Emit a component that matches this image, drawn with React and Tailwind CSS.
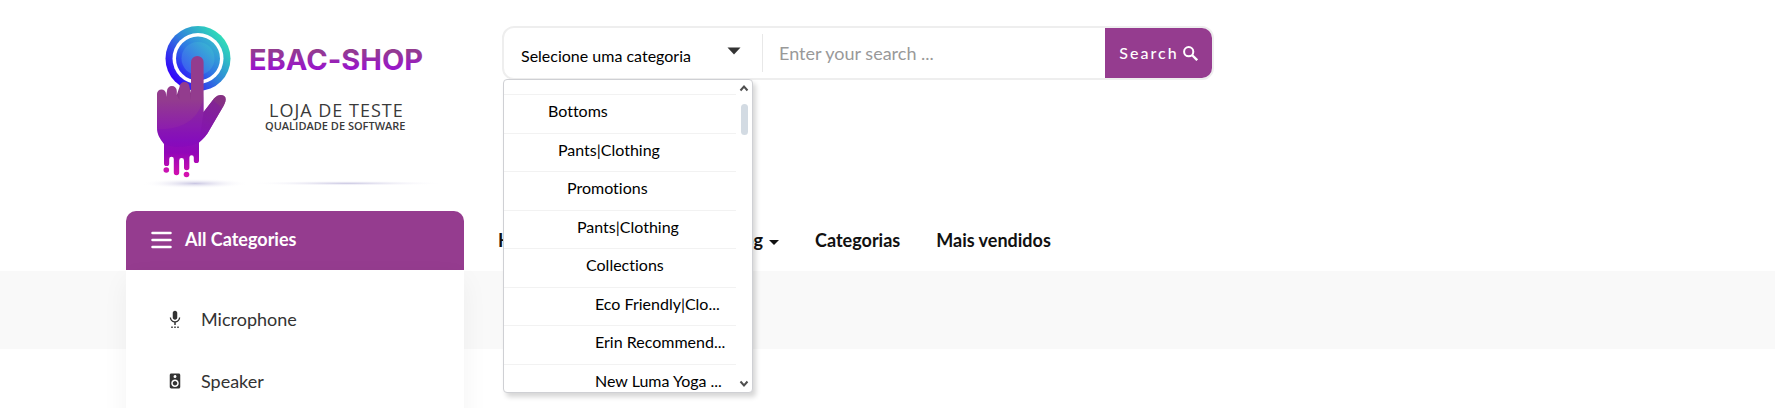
import { MdSettingsVoice, MdSpeaker } from "react-icons/md";

const options = [
  { label: "Bottoms", indent: "pl-[44px]" },
  { label: "Pants|Clothing", indent: "pl-[54px]" },
  { label: "Promotions", indent: "pl-[63px]" },
  { label: "Pants|Clothing", indent: "pl-[73px]" },
  { label: "Collections", indent: "pl-[82px]" },
  { label: "Eco Friendly|Clo...", indent: "pl-[91px]" },
  { label: "Erin Recommend...", indent: "pl-[91px]" },
  { label: "New Luma Yoga ...", indent: "pl-[91px]" },
];

const links = [
  { label: "Home" },
  { label: "Todas as lojas" },
  { label: "Blog", caret: true },
  { label: "Categorias" },
  { label: "Mais vendidos" },
];

function Logo() {
  return (
    <svg viewBox="0 0 320 190" width="320" height="190" role="img" aria-label="EBAC-SHOP">
      <defs>
        <linearGradient id="ring" x1="0.15" y1="0.85" x2="0.9" y2="0.2">
          <stop offset="0" stopColor="#3302fa" />
          <stop offset="0.5" stopColor="#2f7fdc" />
          <stop offset="1" stopColor="#2fdcb9" />
        </linearGradient>
        <linearGradient id="disc" x1="0.1" y1="0.9" x2="0.85" y2="0.1">
          <stop offset="0" stopColor="#2b1df5" />
          <stop offset="0.5" stopColor="#2f78e4" />
          <stop offset="1" stopColor="#35b4cf" />
        </linearGradient>
        <linearGradient id="core" x1="0.1" y1="0.9" x2="0.9" y2="0.1">
          <stop offset="0" stopColor="#3c5cf2" />
          <stop offset="1" stopColor="#38b5d2" />
        </linearGradient>
        <linearGradient id="hand" gradientUnits="userSpaceOnUse" x1="0" y1="46" x2="0" y2="167">
          <stop offset="0" stopColor="#933c8e" />
          <stop offset="0.36" stopColor="#933c8e" />
          <stop offset="0.7" stopColor="#8a10bb" />
          <stop offset="0.8" stopColor="#9206b8" />
          <stop offset="1" stopColor="#d80fae" />
        </linearGradient>
        <linearGradient id="thumb" gradientUnits="userSpaceOnUse" x1="92" y1="92" x2="68" y2="134">
          <stop offset="0" stopColor="#822f80" />
          <stop offset="1" stopColor="#8a10b8" />
        </linearGradient>
        <linearGradient id="brand" x1="0" y1="0" x2="0" y2="1">
          <stop offset="0.25" stopColor="#933c90" />
          <stop offset="0.8" stopColor="#9a12cf" />
        </linearGradient>
        <radialGradient id="shade">
          <stop offset="0" stopColor="#c9c6e2" />
          <stop offset="1" stopColor="#ffffff" stopOpacity="0" />
        </radialGradient>
      </defs>
      <ellipse cx="65" cy="173.500" rx="54" ry="5" fill="url(#shade)" />
      <ellipse cx="217" cy="173.300" rx="100" ry="2.500" fill="url(#shade)" />
      <circle cx="68" cy="48.500" r="32.500" fill="url(#ring)" />
      <circle cx="68" cy="48.500" r="25.500" fill="#fff" />
      <circle cx="68" cy="48.500" r="22" fill="url(#disc)" />
      <circle cx="68" cy="48.500" r="16.500" fill="url(#core)" />
      <path
        d="M61 52.300a6.300 6.300 0 0 1 12.600 0V102L84 88.500C88 84 93 84 95.200 87C96.500 90 95 93 93.500 96L80 119C77 125 73 129 69 132.500V150.500a2.600 2.600 0 0 1-5.200 0V147.500a2.200 2.200 0 0 0-4.400 0V157.500a2.700 2.700 0 0 1-5.400 0V150.500a2.400 2.400 0 0 0-4.800 0V162.500a2.700 2.700 0 0 1-5.400 0V149a2.300 2.300 0 0 0-4.600 0V153.500a2.600 2.600 0 0 1-5.200 0V134C30 129 27 124 27 118V84a4.200 4.200 0 0 1 9 0V87L37 81a4.900 4.900 0 0 1 9.800 0V85L49.500 77a5 5 0 0 1 10 0L61 83Z"
        fill="url(#hand)"
      />
      <path d="M73.600 102L84 88.500C88 84 93 84 95.200 87C96.500 90 95 93 93.500 96L80 119C77 125 73 129 69 132.500Z" fill="url(#thumb)" opacity="0.8" />
      <path d="M27 119C52 121 72 108 73.600 84V102L83 90L92 98L80 119C77 125 73 129 69 132.500C57 138 44 138 34 134C30 129 27 124 27 119Z" fill="#7805bd" opacity="0.22" />
      <path d="M46.800 85L49.500 77V90ZM59.500 77L61 83V90Z" fill="#6d2470" opacity="0.25" />
      <circle cx="36.300" cy="160" r="2.800" fill="#c912b2" />
      <circle cx="56.500" cy="164.500" r="2.800" fill="#d411b0" />
      <text x="119" y="60" fill="url(#brand)" className="font-[Inter,sans-serif] text-[29px] font-bold">EBAC-SHOP</text>
      <text x="139" y="107" fill="#3a3a3a" className="font-['Open_Sans',sans-serif] text-[18px] tracking-[1px]">LOJA DE TESTE</text>
      <text x="135" y="120" fill="#3a3a3a" className="font-['Open_Sans',sans-serif] text-[11px] font-semibold">QUALIDADE DE SOFTWARE</text>
    </svg>
  );
}

function CategoryList() {
  return (
    <div className="absolute -left-px top-full z-20 mt-px flex h-[314px] w-[250px] overflow-hidden rounded border border-[#cfd0d4] bg-white shadow-[3px_4px_5px_rgba(0,0,0,0.16)]">
      <ul role="listbox" aria-label="Categorias" className="min-w-0 flex-1 pt-[14px]">
        {options.map((o, i) => (
          <li
            key={i}
            role="option"
            aria-selected="false"
            className={`border-t border-[#f2f2f2] pt-[6px] odd:h-[39px] even:h-[38px] ${o.indent}`}
          >
            <span className="block whitespace-nowrap text-[16px] leading-[20px] text-black">{o.label}</span>
          </li>
        ))}
      </ul>
      <div className="flex w-4 flex-col items-center justify-between py-1" aria-hidden="true">
        <svg width="10" height="8" viewBox="0 0 10 8" fill="none" stroke="#505050" strokeWidth="2"><path d="M1.500 6.500L5 2.500L8.500 6.500" /></svg>
        <div className="mt-3 mb-auto h-[31px] w-[7px] rounded-sm bg-[#d3dbe3]" />
        <svg width="10" height="8" viewBox="0 0 10 8" fill="none" stroke="#505050" strokeWidth="2"><path d="M1.500 1.500L5 5.500L8.500 1.500" /></svg>
      </div>
    </div>
  );
}

function SearchBar() {
  return (
    <form className="relative mt-[26px] flex h-[54px] w-full max-w-[712px] rounded-xl border-2 border-[#eeeeee] bg-white" onSubmit={(e) => e.preventDefault()}>
      <div className="relative flex w-[258px] items-center">
        <select aria-label="Categoria" className="h-full w-full appearance-none bg-transparent pl-[17px] pt-[6px] text-[16px] text-black outline-none">
          <option>Selecione uma categoria</option>
        </select>
        <svg className="pointer-events-none absolute right-[21px] top-[19px]" width="14" height="8" viewBox="0 0 14 8" fill="#333"><path d="M0.500 0.500h13L7 7.500z" /></svg>
      </div>
      <div className="my-[6px] w-px bg-[#e8e8e8]" />
      <input type="search" aria-label="Enter your search" placeholder="Enter your search ..." className="min-w-0 flex-1 bg-transparent px-4 text-[18px] text-[#333] outline-none placeholder:text-[#999]" />
      <button type="submit" className="flex w-[107px] items-center justify-center gap-1 rounded-r-[10px] bg-[#953c8f] text-[16px] font-medium tracking-[2px] text-white">
        Search
        <svg width="15" height="15" viewBox="0 0 15 15" fill="none" stroke="currentColor" strokeWidth="2" aria-hidden="true">
          <circle cx="5.700" cy="5.700" r="4.600" />
          <path d="M9 9L14.200 14.200" strokeWidth="2.400" />
        </svg>
      </button>
      <CategoryList />
    </form>
  );
}

export default function App() {
  return (
    <div className="relative min-h-screen overflow-hidden bg-white font-[Lato,sans-serif] [font-variant-ligatures:none]">
      <header className="mx-auto max-w-[1523px]">
        <div className="flex h-[211px]">
          <a href="#home" className="mr-[52px] w-[324px] shrink-0 pl-1 pt-[10px]">
            <Logo />
          </a>
          <SearchBar />
        </div>
        <div className="flex h-[60px]">
          <div className="relative w-[338px] shrink-0">
            <button type="button" className="flex h-[59px] w-full items-center gap-[13px] rounded-t-[10px] bg-[#953c8f] pb-[2px] pl-[25px] text-[18px] font-bold text-white">
              <svg width="21" height="18" viewBox="0 0 21 18" stroke="#fff" strokeWidth="2.500" strokeLinecap="round"><path d="M1.500 2h18M1.500 9h18M1.500 16h18" /></svg>
              All Categories
            </button>
            <ul className="absolute left-0 right-0 top-[59px] z-10 bg-white pt-[18px] pb-6 shadow-[0_10px_25px_rgba(0,0,0,0.05)]">
              <li>
                <a href="#microphone" className="flex h-[62px] items-center gap-[17px] pl-[40px] text-[18px] text-[#333]">
                  <MdSettingsVoice size={18} />
                  Microphone
                </a>
              </li>
              <li>
                <a href="#speaker" className="flex h-[62px] items-center gap-[17px] pl-[40px] text-[18px] text-[#333]">
                  <MdSpeaker size={18} />
                  Speaker
                </a>
              </li>
            </ul>
          </div>
          <nav className="flex items-center gap-9 pb-[2px] pl-[34px] text-[18px] font-bold text-[#111]">
            {links.map((l) => (
              <a key={l.label} href={"#" + l.label} className="flex items-center gap-[6px] whitespace-nowrap">
                {l.label}
                {l.caret && <svg width="10" height="5" viewBox="0 0 10 5" fill="currentColor" className="mt-1"><path d="M0 0h10L5 5z" /></svg>}
              </a>
            ))}
          </nav>
        </div>
      </header>
      <div className="h-[78px] bg-[#f9f9f9]" />
    </div>
  );
}
